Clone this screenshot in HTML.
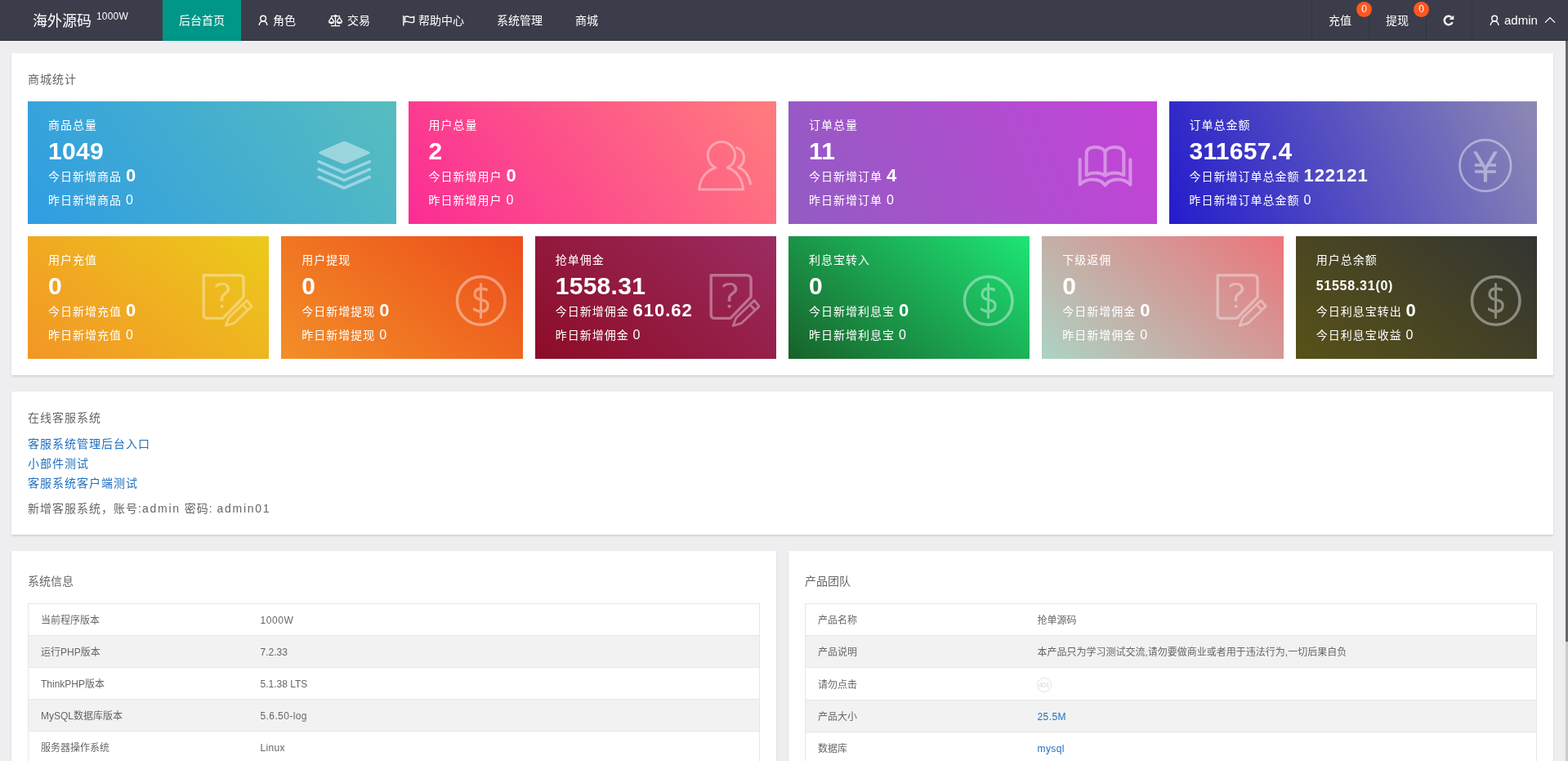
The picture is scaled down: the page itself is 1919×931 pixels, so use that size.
<!DOCTYPE html>
<html lang="zh-CN">
<head>
<meta charset="utf-8">
<title>海外源码</title>
<style>
*{box-sizing:border-box;margin:0;padding:0}
html,body{width:1919px;height:931px;overflow:hidden}
body{position:relative;background:#eeedf0;font-family:"Liberation Sans","Noto Sans CJK SC",sans-serif;font-size:14px;color:#666;-webkit-font-smoothing:antialiased}
a{text-decoration:none;color:inherit}
h3{font-weight:normal}
#app{position:absolute;left:0;top:0;width:1919px;height:931px;overflow:hidden;will-change:transform}
.abs{position:absolute}
.t{position:absolute;white-space:nowrap;line-height:20px;height:20px}
#hd{position:absolute;left:0;top:0;width:1919px;height:50px;background:#3b3d4a;color:#fff;border-bottom:1px solid #33343f}
#hd .t{color:#fff}
#hd .tab{position:absolute;left:199px;top:0;width:96px;height:50px;background:#009688}
#hd .sep{position:absolute;top:0;width:1px;height:49px;background:#333541}
.badge{position:absolute;width:19px;height:19px;border-radius:50%;background:#ff5722;color:#fff;font-size:12px;line-height:19px;text-align:center}
#wl{position:absolute;left:0;top:50px;width:1916px;height:1px;background:#f6f6f8}
#sb{position:absolute;left:1916px;top:50px;width:3px;height:881px;background:#cbcbcb}
#sb i{position:absolute;left:0;top:0;width:3px;height:735px;background:#666}
.card{position:absolute;background:#fff;box-shadow:0 1.5px 2.5px 0 rgba(0,0,0,.11),0 0 1px 0 rgba(0,0,0,.05)}
.ct{position:absolute;left:20px;white-space:nowrap;line-height:20px;font-size:14px;color:#666}
.box{position:absolute;height:150px;color:#fff;overflow:hidden}
.box .t{color:#fff}
.box .lb{left:25px;top:19px;font-size:14px;letter-spacing:1px}
.box .nm{left:25px;top:41px;font-size:30px;font-weight:bold;line-height:40px;height:40px;letter-spacing:.3px}
.box .r1{left:25px;top:75px;font-size:14px;letter-spacing:1px;line-height:30px;height:30px}
.box .r1 b{font-size:22px;font-weight:bold;letter-spacing:1px;margin-left:0;position:relative;top:1px}
.box .r2{left:25px;top:110px;font-size:14px;letter-spacing:1px;line-height:22px;height:22px}
.box .r2 span{font-size:16px;margin-left:0;position:relative;top:0px}
.box svg{position:absolute}
.lk{color:#1e6fbf}
.la{letter-spacing:1.75px}
table{position:absolute;border-collapse:collapse;font-size:12px;color:#666;table-layout:fixed}
table{border:1px solid #e6e6e6}
td{border-top:1px solid #e6e6e6;border-bottom:1px solid #e6e6e6;height:39px;padding:2px 15px 0;line-height:20px;white-space:nowrap;overflow:hidden}
tr.ev td{background:#f2f2f2}
td a{color:#1e6fbf}
</style>
</head>
<body>
<div id="app">
<header id="hd">
<div class="t" style="left:40px;top:14.500px;font-size:18px;line-height:22px;height:22px">海外源码</div>
<div class="t" style="left:118px;top:10px;font-size:12px;letter-spacing:.2px">1000W</div>
<div class="tab"></div>
<a class="t" style="left:219px;top:15px">后台首页</a>
<svg class="abs" style="left:315px;top:18px" width="14" height="14" viewBox="0 0 14 14" fill="none" stroke="#fff" stroke-width="1.45"><circle cx="7.100" cy="4.500" r="3.350"/><path d="M2.200 12.900c.3-3.200 2.300-4.800 4.900-4.800s4.600 1.600 4.900 4.800"/></svg>
<a class="t" style="left:334px;top:15px">角色</a>
<svg class="abs" style="left:401px;top:18px" width="19" height="15" viewBox="0 0 19 15" fill="none" stroke="#fff" stroke-width="1.3"><path d="M4 1.6h11M9.5 1.6v11.8M4 13.6h11"/><path d="M1.2 8.6L4.6 3.2 8 8.6M11 8.6l3.4-5.4 3.4 5.4"/><path d="M1 8.6h7.2c0 1.8-1.6 2.8-3.6 2.8S1 10.400 1 8.600zM10.800 8.600h7.200c0 1.8-1.600 2.800-3.600 2.800s-3.600-1-3.600-2.800z" fill="#fff" stroke="none"/><circle cx="9.5" cy="1.6" r="1" fill="#3b3d4a"/></svg>
<a class="t" style="left:425px;top:15px">交易</a>
<svg class="abs" style="left:492px;top:18px" width="16" height="14" viewBox="0 0 16 14" fill="none" stroke="#fff" stroke-width="1.4"><path d="M1.8 1v12.600"/><path d="M3.600 2.600c2-1.200 3.800-.6 5.600.2 1.800.7 3.400.7 5.400-.4v6.400c-2 1.100-3.600 1.100-5.400.4-1.800-.8-3.600-1.400-5.600-.2z"/></svg>
<a class="t" style="left:512px;top:15px">帮助中心</a>
<a class="t" style="left:608px;top:15px">系统管理</a>
<a class="t" style="left:704px;top:15px">商城</a>
<div class="sep" style="left:1605px"></div>
<div class="sep" style="left:1675px"></div>
<div class="sep" style="left:1745px"></div>
<div class="sep" style="left:1801px"></div>
<a class="t" style="left:1626px;top:15px">充值</a>
<div class="badge" style="left:1660px;top:2px">0</div>
<a class="t" style="left:1696px;top:15px">提现</a>
<div class="badge" style="left:1730px;top:2px">0</div>
<svg class="abs" style="left:1765px;top:17px" width="16" height="16" viewBox="0 0 16 16" fill="none" stroke="#fff" stroke-width="2.400"><path d="M11.300 4A5.200 5.200 0 1 0 12.650 10.150"/><path d="M14.200 1.700V7H8.600z" fill="#fff" stroke="none"/></svg>
<svg class="abs" style="left:1822px;top:18px" width="14" height="14" viewBox="0 0 14 14" fill="none" stroke="#fff" stroke-width="1.45"><circle cx="7.100" cy="4.500" r="3.350"/><path d="M2.200 12.900c.3-3.200 2.300-4.800 4.900-4.800s4.600 1.600 4.900 4.800"/></svg>
<a class="t" style="left:1841px;top:15px;font-size:15px">admin</a>
<svg class="abs" style="left:1890px;top:20px" width="14" height="9" viewBox="0 0 14 9" fill="none" stroke="#fff" stroke-width="1.3"><path d="M1 7.600L7 1.600l6 6"/></svg>
</header>
<div id="wl"></div>
<div id="sb"><i></i></div>
<section class="card" style="left:14px;top:65px;width:1887px;height:394px">
<h3 class="ct" style="top:22px;letter-spacing:1px">商城统计</h3>
<div class="box" style="left:20.0px;top:59px;width:450.5px;background:linear-gradient(-125deg,#57bdbf,#2f9de2)">
<div class="t lb">商品总量</div><div class="t nm">1049</div>
<div class="t r1">今日新增商品 <b>0</b></div>
<div class="t r2">昨日新增商品 <span>0</span></div>
<svg style="left:0;top:0" width="450.50" height="150" viewBox="0 0 450.50 150" fill="none" stroke="#fff" stroke-linecap="round" stroke-linejoin="round" opacity=".43"><g transform="translate(387.20 0)"><path d="M-3.300 49.900Q0.300 48.300 3.900 49.900L29.300 60.900Q33.700 62.850 29.300 64.800L3.900 75.800Q0.300 77.400-3.300 75.800L-28.900 64.800Q-33.100 62.850-28.900 60.900Z" fill="#fff" stroke="none"/><path d="M-31.100 73.700L0 87.200 31.100 73.700M-31.100 83.100L0 96.600 31.100 83.100M-31.100 92.500L0 106 31.100 92.500" stroke-width="3.600"/></g></svg>
</div>
<div class="box" style="left:485.5px;top:59px;width:450.5px;background:linear-gradient(-125deg,#ff7d7d,#fb2c95)">
<div class="t lb">用户总量</div><div class="t nm">2</div>
<div class="t r1">今日新增用户 <b>0</b></div>
<div class="t r2">昨日新增用户 <span>0</span></div>
<svg style="left:0;top:0" width="450.50" height="150" viewBox="0 0 450.50 150" fill="none" stroke="#fff" stroke-linecap="round" stroke-linejoin="round" opacity=".38"><g transform="translate(383.00 0)" stroke-width="3"><path d="M-7.300 81.200A16.700 16.700 0 1 1 7.300 81.200C18.500 84.500 25.500 95 26.600 107.700H-27.400C-26.300 95-19 84.500-7.300 81.200Z"/><path d="M18.700 56.700C25 59 27.600 63.500 27.600 69 27.600 74 24.800 78.500 20.500 80.700 28.500 84 33.800 91 35.400 100.800"/></g></svg>
</div>
<div class="box" style="left:951.0px;top:59px;width:450.5px;background:linear-gradient(-113deg,#c543d8,#925cc3)">
<div class="t lb">订单总量</div><div class="t nm">11</div>
<div class="t r1">今日新增订单 <b>4</b></div>
<div class="t r2">昨日新增订单 <span>0</span></div>
<svg style="left:0;top:0" width="450.50" height="150" viewBox="0 0 450.50 150" fill="none" stroke="#fff" stroke-linecap="round" stroke-linejoin="round" opacity=".4"><g transform="translate(387.50 0)" stroke-width="4"><path d="M-30.900 71.300V101.800C-25.500 96.500-20.500 95.600-15.500 95.600-8.500 95.600-3.500 98 0 102.600 3.500 98 8.500 95.600 15.500 95.600 20.500 95.600 25.500 96.500 30.900 101.800V71.300"/><path d="M-22.800 90.300V64C-22.800 58.500-18.500 55.900-12 55.900-5.500 55.900 0 58.500 0 64V90.800C-3.500 88.500-7.500 87.600-11.500 87.600-15.500 87.600-19.500 88.300-22.800 90.300ZM22.800 90.300V64C22.800 58.500 18.500 55.900 12 55.900 5.500 55.900 0 58.500 0 64V90.800C3.500 88.500 7.500 87.600 11.500 87.600 15.500 87.600 19.500 88.300 22.800 90.300Z"/></g></svg>
</div>
<div class="box" style="left:1416.5px;top:59px;width:450.5px;background:linear-gradient(-113deg,#8d89b4,#241ccc)">
<div class="t lb">订单总金额</div><div class="t nm">311657.4</div>
<div class="t r1">今日新增订单总金额 <b>122121</b></div>
<div class="t r2">昨日新增订单总金额 <span>0</span></div>
<svg style="left:0;top:0" width="450.50" height="150" viewBox="0 0 450.50 150" fill="none" stroke="#fff" stroke-linecap="round" stroke-linejoin="round" opacity=".42"><g transform="translate(386.80 0)"><circle cx="0" cy="78.500" r="31.300" stroke-width="2.700"/><text transform="translate(0 97.800) scale(1.08 1)" x="0" y="0" font-family="DejaVu Sans,Liberation Sans,sans-serif" font-weight="200" font-size="50" text-anchor="middle" fill="#fff" stroke-width="1.400">¥</text></g></svg>
</div>
<div class="box" style="left:20.00px;top:224px;width:295.33px;background:linear-gradient(-141deg,#ecca1b,#f39526)">
<div class="t lb">用户充值</div><div class="t nm">0</div>
<div class="t r1">今日新增充值 <b>0</b></div>
<div class="t r2">昨日新增充值 <span>0</span></div>
<svg style="left:0;top:0" width="295.33" height="150" viewBox="0 0 295.33 150" fill="none" stroke="#fff" stroke-linecap="round" stroke-linejoin="round" opacity=".36"><g transform="translate(239.63 0)" stroke-width="3.400"><path d="M24.400 74.400V52.700C24.400 49.700 22.400 47.700 19.400 47.700H-24.400V96.400C-24.400 98.900-22.400 100.400-20.400 100.400H-0.700Z"/><text transform="translate(-0.800 87.300) scale(1.18 1)" x="0" y="0" font-family="DejaVu Sans,Liberation Sans,sans-serif" font-weight="200" font-size="39" text-anchor="middle" fill="#fff" stroke-width="1.100">?</text><path d="M28.500 78.500L34.500 85.800 13 106.300 2.500 109.500 6.200 99.900ZM23.500 83.900L29.500 90.300" stroke-width="2.800"/></g></svg>
</div>
<div class="box" style="left:330.33px;top:224px;width:295.33px;background:linear-gradient(-141deg,#ec4c1b,#f38f27)">
<div class="t lb">用户提现</div><div class="t nm">0</div>
<div class="t r1">今日新增提现 <b>0</b></div>
<div class="t r2">昨日新增提现 <span>0</span></div>
<svg style="left:0;top:0" width="295.33" height="150" viewBox="0 0 295.33 150" fill="none" stroke="#fff" stroke-linecap="round" stroke-linejoin="round" opacity=".4"><g transform="translate(244.73 0)" stroke-linecap="butt"><circle cx="0" cy="78.900" r="29.300" stroke-width="3.500"/><text transform="translate(0 93) scale(.84 1)" x="0" y="0" font-family="DejaVu Sans,Liberation Sans,sans-serif" font-weight="200" font-size="46" text-anchor="middle" fill="#fff" stroke-width="1.600">$</text></g></svg>
</div>
<div class="box" style="left:640.67px;top:224px;width:295.33px;background:linear-gradient(-141deg,#9c2c62,#8c0c26)">
<div class="t lb">抢单佣金</div><div class="t nm">1558.31</div>
<div class="t r1">今日新增佣金 <b>610.62</b></div>
<div class="t r2">昨日新增佣金 <span>0</span></div>
<svg style="left:0;top:0" width="295.33" height="150" viewBox="0 0 295.33 150" fill="none" stroke="#fff" stroke-linecap="round" stroke-linejoin="round" opacity=".36"><g transform="translate(239.63 0)" stroke-width="3.400"><path d="M24.400 74.400V52.700C24.400 49.700 22.400 47.700 19.400 47.700H-24.400V96.400C-24.400 98.900-22.400 100.400-20.400 100.400H-0.700Z"/><text transform="translate(-0.800 87.300) scale(1.18 1)" x="0" y="0" font-family="DejaVu Sans,Liberation Sans,sans-serif" font-weight="200" font-size="39" text-anchor="middle" fill="#fff" stroke-width="1.100">?</text><path d="M28.500 78.500L34.500 85.800 13 106.300 2.500 109.500 6.200 99.900ZM23.500 83.900L29.500 90.300" stroke-width="2.800"/></g></svg>
</div>
<div class="box" style="left:951.00px;top:224px;width:295.33px;background:linear-gradient(-141deg,#1ee576,#18612a)">
<div class="t lb">利息宝转入</div><div class="t nm">0</div>
<div class="t r1">今日新增利息宝 <b>0</b></div>
<div class="t r2">昨日新增利息宝 <span>0</span></div>
<svg style="left:0;top:0" width="295.33" height="150" viewBox="0 0 295.33 150" fill="none" stroke="#fff" stroke-linecap="round" stroke-linejoin="round" opacity=".4"><g transform="translate(244.73 0)" stroke-linecap="butt"><circle cx="0" cy="78.900" r="29.300" stroke-width="3.500"/><text transform="translate(0 93) scale(.84 1)" x="0" y="0" font-family="DejaVu Sans,Liberation Sans,sans-serif" font-weight="200" font-size="46" text-anchor="middle" fill="#fff" stroke-width="1.600">$</text></g></svg>
</div>
<div class="box" style="left:1261.33px;top:224px;width:295.33px;background:linear-gradient(-141deg,#ec747a,#acd4c4)">
<div class="t lb">下级返佣</div><div class="t nm">0</div>
<div class="t r1">今日新增佣金 <b>0</b></div>
<div class="t r2">昨日新增佣金 <span>0</span></div>
<svg style="left:0;top:0" width="295.33" height="150" viewBox="0 0 295.33 150" fill="none" stroke="#fff" stroke-linecap="round" stroke-linejoin="round" opacity=".36"><g transform="translate(239.63 0)" stroke-width="3.400"><path d="M24.400 74.400V52.700C24.400 49.700 22.400 47.700 19.400 47.700H-24.400V96.400C-24.400 98.900-22.400 100.400-20.400 100.400H-0.700Z"/><text transform="translate(-0.800 87.300) scale(1.18 1)" x="0" y="0" font-family="DejaVu Sans,Liberation Sans,sans-serif" font-weight="200" font-size="39" text-anchor="middle" fill="#fff" stroke-width="1.100">?</text><path d="M28.500 78.500L34.500 85.800 13 106.300 2.500 109.500 6.200 99.900ZM23.500 83.900L29.500 90.300" stroke-width="2.800"/></g></svg>
</div>
<div class="box" style="left:1571.67px;top:224px;width:295.33px;background:linear-gradient(-141deg,#343432,#585218)">
<div class="t lb">用户总余额</div><div class="t nm" style="font-size:16px;letter-spacing:.75px">51558.31(0)</div>
<div class="t r1">今日利息宝转出 <b>0</b></div>
<div class="t r2">今日利息宝收益 <span>0</span></div>
<svg style="left:0;top:0" width="295.33" height="150" viewBox="0 0 295.33 150" fill="none" stroke="#fff" stroke-linecap="round" stroke-linejoin="round" opacity=".4"><g transform="translate(244.73 0)" stroke-linecap="butt"><circle cx="0" cy="78.900" r="29.300" stroke-width="3.500"/><text transform="translate(0 93) scale(.84 1)" x="0" y="0" font-family="DejaVu Sans,Liberation Sans,sans-serif" font-weight="200" font-size="46" text-anchor="middle" fill="#fff" stroke-width="1.600">$</text></g></svg>
</div>
</section>
<section class="card" style="left:14px;top:479px;width:1887px;height:175px">
<h3 class="ct" style="top:22px;letter-spacing:1px">在线客服系统</h3>
<a class="ct lk" style="top:54px;letter-spacing:1px">客服系统管理后台入口</a>
<a class="ct lk" style="top:78px;letter-spacing:1px">小部件测试</a>
<a class="ct lk" style="top:102px;letter-spacing:1px">客服系统客户端测试</a>
<div class="ct" style="top:133px;letter-spacing:1px">新增客服系统，账号:<span class="la">admin</span> 密码: <span class="la">admin01</span></div>
</section>
<section class="card" style="left:14px;top:674px;width:936px;height:300px">
<h3 class="ct" style="top:27px">系统信息</h3>
<table style="left:20px;top:64px;width:896px"><colgroup><col style="width:269px"><col></colgroup><tr><td>当前程序版本</td><td><span style="letter-spacing:.55px">1000W</span></td></tr><tr class="ev"><td>运行PHP版本</td><td>7.2.33</td></tr><tr><td>ThinkPHP版本</td><td>5.1.38 LTS</td></tr><tr class="ev"><td>MySQL数据库版本</td><td><span style="letter-spacing:.4px">5.6.50-log</span></td></tr><tr><td>服务器操作系统</td><td><span style="letter-spacing:.35px">Linux</span></td></tr></table>
</section>
<section class="card" style="left:965px;top:674px;width:936px;height:300px">
<h3 class="ct" style="top:27px">产品团队</h3>
<table style="left:20px;top:64px;width:896px"><colgroup><col style="width:269px"><col></colgroup><tr><td>产品名称</td><td>抢单源码</td></tr><tr class="ev"><td>产品说明</td><td>本产品只为学习测试交流,请勿要做商业或者用于违法行为,一切后果自负</td></tr><tr><td style="height:40px">请勿点击</td><td><span style="display:inline-block;vertical-align:middle;position:relative;left:-1px;top:0;width:18px;height:18px;border:1px solid #e2e2e2;border-radius:50%;font-size:9px;line-height:16px;text-align:center;color:#dcdcdc;letter-spacing:-.9px;text-indent:-.9px">404</span></td></tr><tr class="ev"><td>产品大小</td><td><a style="letter-spacing:.4px">25.5M</a></td></tr><tr><td>数据库</td><td><a style="letter-spacing:.4px">mysql</a></td></tr></table>
</section>
</div>
</body>
</html>
